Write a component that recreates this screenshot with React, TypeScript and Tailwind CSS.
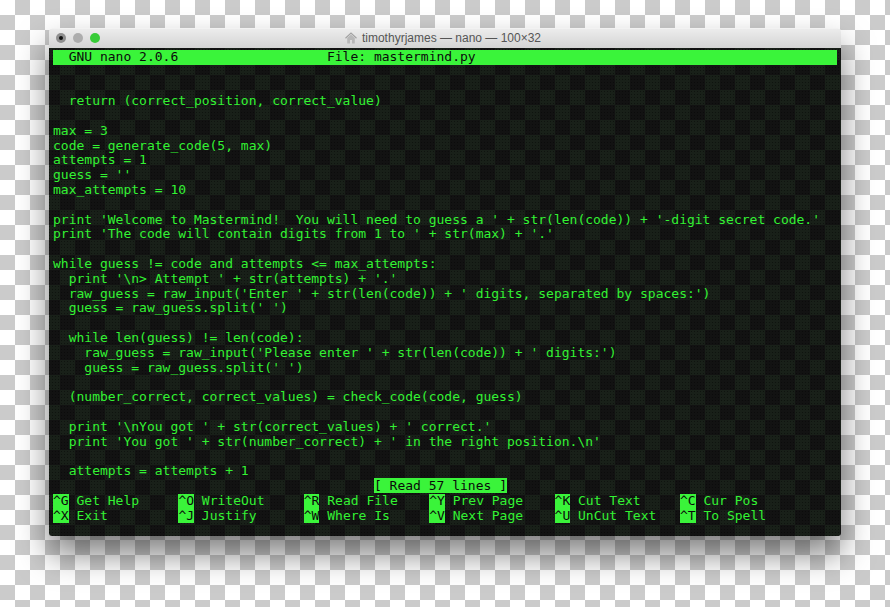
const rows: string[] = [
  "",
  "",
  "  return (correct_position, correct_value)",
  "",
  "max = 3",
  "code = generate_code(5, max)",
  "attempts = 1",
  "guess = ''",
  "max_attempts = 10",
  "",
  "print 'Welcome to Mastermind!  You will need to guess a ' + str(len(code)) + '-digit secret code.'",
  "print 'The code will contain digits from 1 to ' + str(max) + '.'",
  "",
  "while guess != code and attempts <= max_attempts:",
  "  print '\\n> Attempt ' + str(attempts) + '.'",
  "  raw_guess = raw_input('Enter ' + str(len(code)) + ' digits, separated by spaces:')",
  "  guess = raw_guess.split(' ')",
  "",
  "  while len(guess) != len(code):",
  "    raw_guess = raw_input('Please enter ' + str(len(code)) + ' digits:')",
  "    guess = raw_guess.split(' ')",
  "",
  "  (number_correct, correct_values) = check_code(code, guess)",
  "",
  "  print '\\nYou got ' + str(correct_values) + ' correct.'",
  "  print 'You got ' + str(number_correct) + ' in the right position.\\n'",
  "",
  "  attempts = attempts + 1",
];

const shortcuts: [string, string][][] = [
  [["^G", " Get Help"], ["^O", " WriteOut"], ["^R", " Read File"], ["^Y", " Prev Page"], ["^K", " Cut Text"], ["^C", " Cur Pos"]],
  [["^X", " Exit"], ["^J", " Justify"], ["^W", " Where Is"], ["^V", " Next Page"], ["^U", " UnCut Text"], ["^T", " To Spell"]],
];

function Row({ children }: { children?: React.ReactNode }) {
  return <div className="h-[14.8px] leading-[14.8px] whitespace-pre">{children}</div>;
}

export default function App() {
  return (
    <div className="w-[890px] h-[607px] overflow-hidden pt-[28px] pl-[49px] bg-[conic-gradient(#cbcbcb_25%,#ffffff_25%_50%,#cbcbcb_50%_75%,#ffffff_75%)] bg-[length:30px_30px]">
      <div className="w-[792px] h-[508px] flex flex-col rounded-t-[4px] rounded-b-[3px] overflow-hidden shadow-[0_18px_32px_rgba(0,0,0,0.5)]">
        <div className="h-[20px] shrink-0 flex items-center pl-[7px] pb-[2px] gap-[7px] bg-gradient-to-b from-[#ececec] to-[#d4d4d4] border-t border-[#f2f2f2]">
          <span className="w-[10px] h-[10px] rounded-full bg-[#8f8f8f] flex items-center justify-center">
            <span className="w-[4px] h-[4px] rounded-full bg-[#111111]" />
          </span>
          <span className="w-[10px] h-[10px] rounded-full bg-[#adadad]" />
          <span className="w-[10px] h-[10px] rounded-full bg-[#38cc38]" />
          <div className="flex-1 flex items-center justify-center gap-[5px] pr-[62px] font-['Liberation_Sans',sans-serif] text-[12px] text-[#555555]">
            <svg width="12" height="12" viewBox="0 0 12 12" className="shrink-0">
              <path d="M0.5 6.2 6 1 11.5 6.2" fill="none" stroke="#a3a3a3" strokeWidth="1.2" />
              <path d="M2.2 6V11.5H5V8H7V11.5H9.8V6L6 2.6Z" fill="#b8b8b8" />
            </svg>
            <span>timothyrjames — nano — 100×32</span>
          </div>
        </div>
        <div className="flex-1 pl-[4px] pt-[1.5px] bg-[#171717] bg-fixed bg-[image:radial-gradient(rgba(0,0,0,0.4)_0.7px,transparent_1px),conic-gradient(rgba(0,0,0,0.2)_25%,rgba(40,120,40,0.09)_25%_50%,rgba(0,0,0,0.2)_50%_75%,rgba(40,120,40,0.09)_75%)] bg-[length:3px_3px,30px_30px] text-[#33f233] font-['DejaVu_Sans_Mono',monospace] text-[13px]">
          <div className="w-[784px] h-[15.2px] leading-[14.4px] whitespace-pre bg-[#3af43a] text-[#0a0a0a]">
            {"  GNU nano 2.0.6                   File: mastermind.py"}
          </div>
          {rows.map((r, i) => (
            <Row key={i}>{r}</Row>
          ))}
          <Row>
            {" ".repeat(41)}
            <span className="bg-[#3af43a] text-[#0a0a0a]">{"[ Read 57 lines ]"}</span>
          </Row>
          {shortcuts.map((line, i) => (
            <Row key={i}>
              {line.map(([k, label]) => (
                <span key={k} className="inline-block w-[125.4px]">
                  <span className="inline-block h-[14.8px] bg-[#3af43a] text-[#0a0a0a]">{k}</span>
                  {label}
                </span>
              ))}
            </Row>
          ))}
        </div>
      </div>
    </div>
  );
}
